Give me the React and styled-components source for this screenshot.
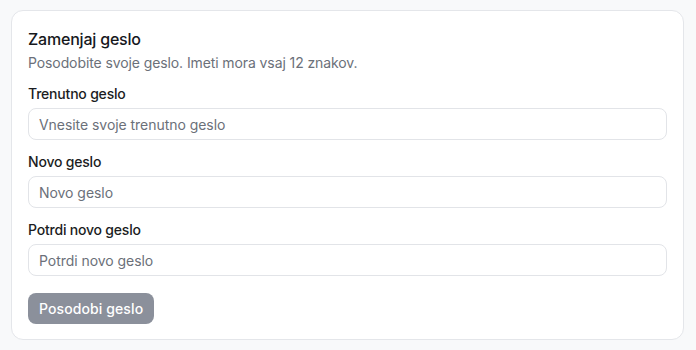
import React from 'react'
import styled, { createGlobalStyle } from 'styled-components'

const GlobalStyle = createGlobalStyle`
  * { box-sizing: border-box; }
  html, body {
    margin: 0;
    padding: 0;
    background: #f8f9fa;
    font-family: Inter, "Noto Sans", sans-serif;
  }
`

const Page = styled.div`
  padding: 10px 12px 10px 11px;
`

const Card = styled.form`
  background: #fff;
  border: 1px solid #e4e6ea;
  border-radius: 12px;
  padding: 16px 16px 15px 16px;
  display: flex;
  flex-direction: column;
`

const Header = styled.div`
  display: flex;
  flex-direction: column;
  gap: 2px;
  margin-bottom: 11px;
`

const Title = styled.h2`
  margin: 0;
  font-size: 16px;
  line-height: 24px;
  font-weight: 500;
  color: #16181d;
  letter-spacing: -0.2px;
`

const Description = styled.p`
  margin: 0;
  font-size: 14px;
  line-height: 20px;
  color: #6b7079;
  letter-spacing: -0.1px;
`

const Fields = styled.div`
  display: flex;
  flex-direction: column;
  gap: 12px;
`

const Field = styled.label`
  display: flex;
  flex-direction: column;
  gap: 4px;
`

const Label = styled.span`
  font-size: 14px;
  line-height: 20px;
  font-weight: 500;
  color: #1b1d22;
  letter-spacing: -0.2px;
`

const Input = styled.input`
  height: 32px;
  width: 100%;
  border: 1px solid #e2e4e8;
  border-radius: 8px;
  padding: 0 10px;
  font-family: inherit;
  font-size: 14px;
  color: #16181d;
  background: #fff;
  outline: none;
  letter-spacing: -0.05px;
  &::placeholder {
    color: #6b7079;
  }
`

const Button = styled.button`
  align-self: flex-start;
  margin-top: 17px;
  height: 31px;
  padding: 0 11px;
  border: none;
  border-radius: 8px;
  background: #8b909b;
  color: #fff;
  font-family: inherit;
  font-size: 14px;
  font-weight: 500;
  letter-spacing: 0.1px;
  cursor: not-allowed;
`

const fields = [
  { label: 'Trenutno geslo', placeholder: 'Vnesite svoje trenutno geslo' },
  { label: 'Novo geslo', placeholder: 'Novo geslo' },
  { label: 'Potrdi novo geslo', placeholder: 'Potrdi novo geslo' },
]

export default function App() {
  return (
    <>
      <GlobalStyle />
      <Page>
        <Card onSubmit={e => e.preventDefault()}>
          <Header>
            <Title>Zamenjaj geslo</Title>
            <Description>Posodobite svoje geslo. Imeti mora vsaj 12 znakov.</Description>
          </Header>
          <Fields>
            {fields.map(f => (
              <Field key={f.label}>
                <Label>{f.label}</Label>
                <Input type="password" placeholder={f.placeholder} />
              </Field>
            ))}
          </Fields>
          <Button type="submit" disabled>Posodobi geslo</Button>
        </Card>
      </Page>
    </>
  )
}
